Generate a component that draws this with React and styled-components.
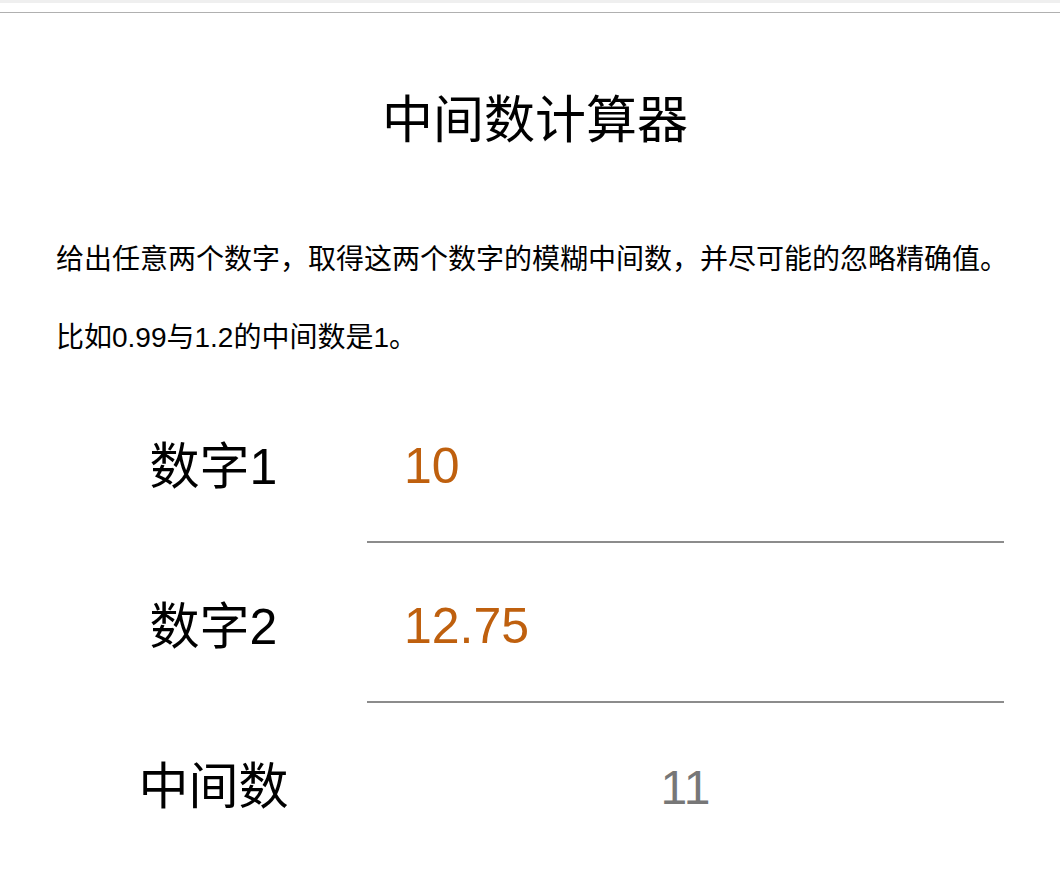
import styled, {createGlobalStyle} from "styled-components";
import {useState} from "react";

const GlobalStyle = createGlobalStyle`
    html, body {
        margin: 0;
        padding: 0;
        background: #ffffff;
    }

    body {
        font-family: "Liberation Sans", "Noto Sans CJK SC", sans-serif;
        color: #000000;
    }
`;

// Thin browser strip and separator line at the top of the shot
const TopBar = styled.div`
    height: 3px;
    background-color: #efefef;
`;

const Separator = styled.div`
    margin-top: 9px;
    height: 1px;
    background-color: #b0b0b0;
`;

const Page = styled.main`
    padding: 73px 56px 0 56px;
`;

const Title = styled.h1`
    margin: 0;
    padding-left: 10px;
    font-size: 51px;
    font-weight: 400;
    line-height: 70px;
    text-align: center;
`;

const Intro = styled.div`
    display: flex;
    flex-direction: column;
    gap: 36px;
    margin-top: 83px;
`;

const IntroLine = styled.p`
    margin: 0;
    font-size: 28px;
    line-height: 42px;
    white-space: nowrap;
`;

const Form = styled.div`
    display: flex;
    flex-direction: column;
    gap: 8px;
    margin-top: 32px;
`;

const Row = styled.div`
    display: grid;
    grid-template-columns: 311px 1fr;
    height: 152px;
`;

const Label = styled.label`
    display: flex;
    align-items: center;
    justify-content: center;
    padding-left: 4px;
    font-size: 50px;
    line-height: 1;
`;

const Field = styled.input`
    box-sizing: border-box;
    width: 100%;
    height: 100%;
    margin: 0;
    padding: 0 0 0 37px;
    border: none;
    border-bottom: 2px solid #8c8c8c;
    outline: none;
    background: transparent;
    font-family: "Liberation Sans", sans-serif;
    font-size: 50px;
    color: #bf600e;
`;

const Result = styled.div`
    display: flex;
    align-items: center;
    justify-content: center;
    font-size: 48px;
    color: #777777;
`;

// Picks the "roundest" number lying strictly between a and b
function fuzzyMiddle(a, b) {
    const lo = Math.min(a, b);
    const hi = Math.max(a, b);
    if (isNaN(lo) || isNaN(hi)) return "";
    const mid = (lo + hi) / 2;
    let step = Math.pow(10, Math.ceil(Math.log10(Math.max(Math.abs(hi), 1))) + 1);
    while (step > 1e-9) {
        const candidate = Math.round(mid / step) * step;
        if (candidate > lo && candidate < hi) {
            return parseFloat(candidate.toPrecision(12)).toString();
        }
        step /= 10;
    }
    return parseFloat(mid.toPrecision(12)).toString();
}

function App() {
    const [first, setFirst] = useState("10");
    const [second, setSecond] = useState("12.75");

    const middle = fuzzyMiddle(parseFloat(first), parseFloat(second));

    return <>
        <GlobalStyle/>
        <TopBar/>
        <Separator/>
        <Page>
            <Title>中间数计算器</Title>
            <Intro>
                <IntroLine>给出任意两个数字，取得这两个数字的模糊中间数，并尽可能的忽略精确值。</IntroLine>
                <IntroLine>比如0.99与1.2的中间数是1。</IntroLine>
            </Intro>
            <Form>
                <Row>
                    <Label htmlFor="num1">数字1</Label>
                    <Field id="num1" value={first} onChange={e => setFirst(e.target.value)}/>
                </Row>
                <Row>
                    <Label htmlFor="num2">数字2</Label>
                    <Field id="num2" value={second} onChange={e => setSecond(e.target.value)}/>
                </Row>
                <Row>
                    <Label>中间数</Label>
                    <Result>{middle}</Result>
                </Row>
            </Form>
        </Page>
    </>
}

export default App;
